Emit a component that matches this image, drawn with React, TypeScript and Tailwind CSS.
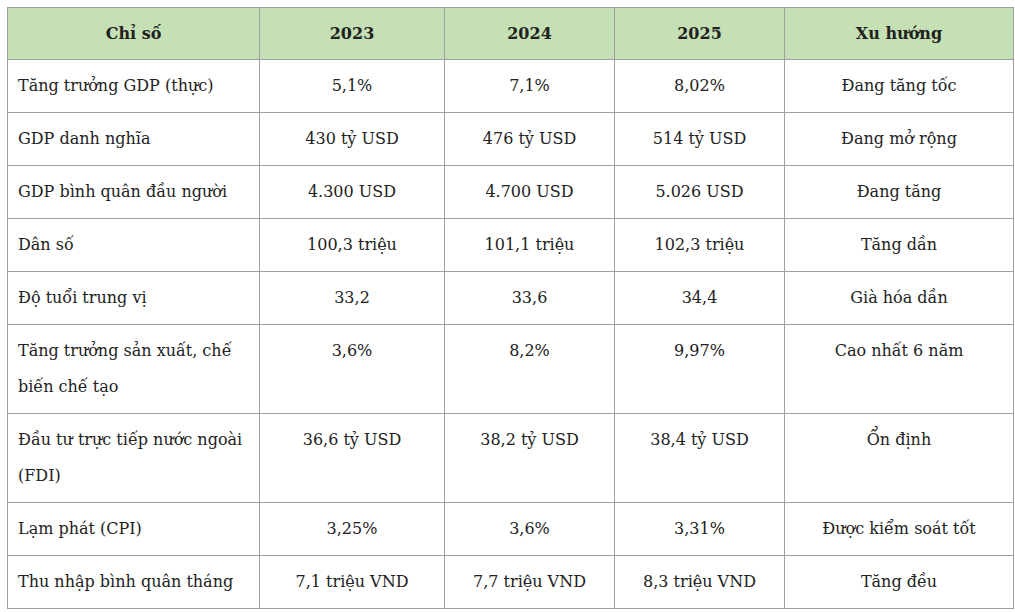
const rows: [string, string, string, string, string][] = [
  ["Tăng trưởng GDP (thực)", "5,1%", "7,1%", "8,02%", "Đang tăng tốc"],
  ["GDP danh nghĩa", "430 tỷ USD", "476 tỷ USD", "514 tỷ USD", "Đang mở rộng"],
  ["GDP bình quân đầu người", "4.300 USD", "4.700 USD", "5.026 USD", "Đang tăng"],
  ["Dân số", "100,3 triệu", "101,1 triệu", "102,3 triệu", "Tăng dần"],
  ["Độ tuổi trung vị", "33,2", "33,6", "34,4", "Già hóa dần"],
  ["Tăng trưởng sản xuất, chế biến chế tạo", "3,6%", "8,2%", "9,97%", "Cao nhất 6 năm"],
  ["Đầu tư trực tiếp nước ngoài (FDI)", "36,6 tỷ USD", "38,2 tỷ USD", "38,4 tỷ USD", "Ổn định"],
  ["Lạm phát (CPI)", "3,25%", "3,6%", "3,31%", "Được kiểm soát tốt"],
  ["Thu nhập bình quân tháng", "7,1 triệu VND", "7,7 triệu VND", "8,3 triệu VND", "Tăng đều"],
];

const headers = ["Chỉ số", "2023", "2024", "2025", "Xu hướng"];

export default function App() {
  return (
    <div className="min-h-screen bg-white p-[7px] font-[family-name:'DejaVu_Serif',serif] text-[16px] text-[#222]">
      <table className="w-[1006px] table-fixed border-collapse">
        <colgroup>
          <col className="w-[252px]" />
          <col className="w-[185px]" />
          <col className="w-[170px]" />
          <col className="w-[170px]" />
          <col className="w-[229px]" />
        </colgroup>
        <thead>
          <tr className="h-[52px] bg-[#c5e0b4]">
            {headers.map((h) => (
              <th key={h} className="border border-[#a0a0a0] text-center align-middle font-bold">
                {h}
              </th>
            ))}
          </tr>
        </thead>
        <tbody>
          {rows.map((r) => (
            <tr key={r[0]}>
              {r.map((cell, i) => (
                <td
                  key={i}
                  className={
                    i === 0
                      ? "border border-[#a0a0a0] py-2 pl-[10px] pr-1 text-left align-top leading-[36px]"
                      : "border border-[#a0a0a0] px-2 py-2 text-center align-top leading-[36px]"
                  }
                >
                  {cell}
                </td>
              ))}
            </tr>
          ))}
        </tbody>
      </table>
    </div>
  );
}
